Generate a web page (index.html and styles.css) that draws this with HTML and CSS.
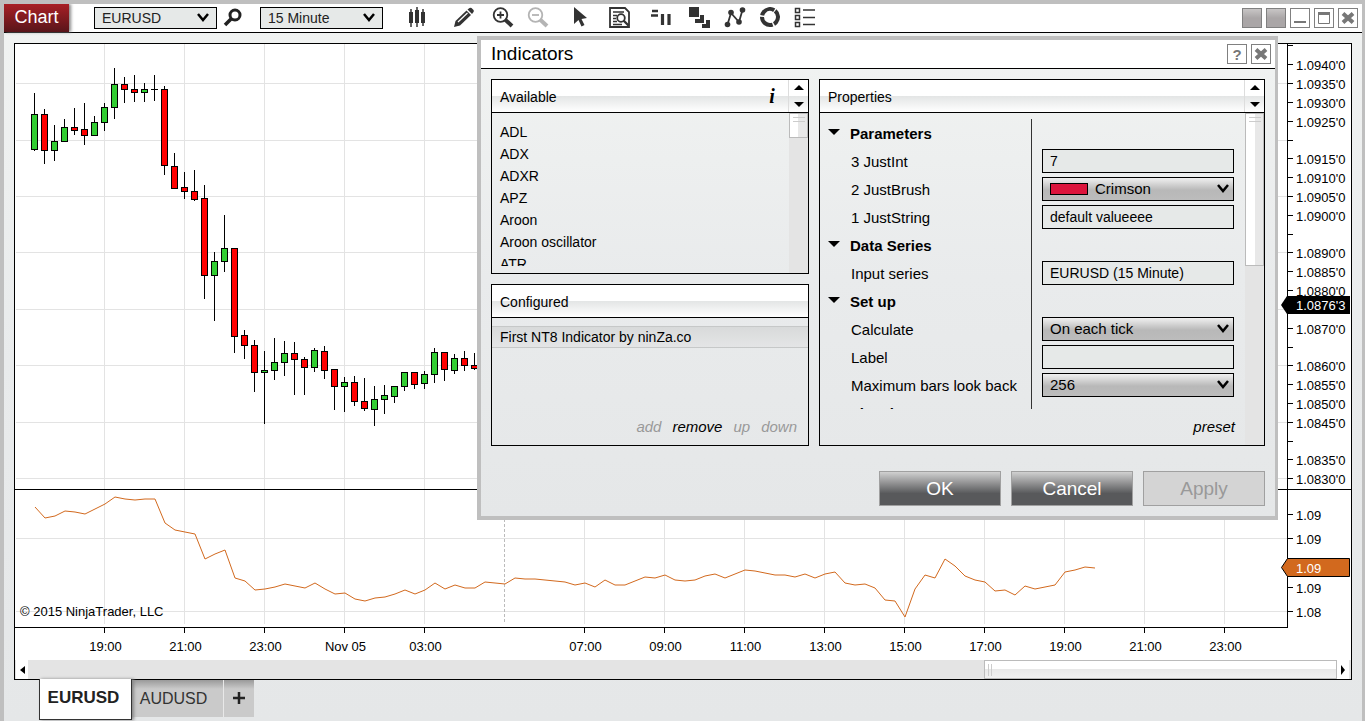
FILE: index.html
```
<!DOCTYPE html>
<html lang="en">
<head>
  <meta charset="UTF-8">
  <title>Chart - EURUSD 15 Minute</title>
  <link rel="stylesheet" href="styles.css">
</head>
<body>

<header class="toolbar">
  <h1 class="app-tab">Chart</h1>
  <select class="tool-select" aria-label="Instrument"><option>EURUSD</option><option>AUDUSD</option></select>
  <button type="button" class="tool search" aria-label="Search">
    <svg width="20" height="20" viewBox="0 0 20 20"><circle cx="12" cy="7" r="5" fill="none" stroke="#222" stroke-width="3"/><path d="M8 11 L2 17" stroke="#222" stroke-width="3.5"/></svg>
  </button>
  <select class="tool-select" aria-label="Interval"><option>15 Minute</option><option>60 Minute</option></select>
  <div class="tools">
    <button type="button" class="tool" aria-label="Chart style">
      <svg width="22" height="22" viewBox="0 0 22 22"><path d="M2 5h4v11H2zM8 3h4v13H8zM14 5h4v11h-4z" fill="#333"/><path d="M4 2v18M10 0v20M16 2v17" stroke="#333" stroke-width="1.500"/></svg>
    </button>
    <button type="button" class="tool sep-l" aria-label="Drawing tools">
      <svg width="22" height="22" viewBox="0 0 22 22"><path d="M1 20l1.500-6L13.500 3.500l4.500 4.500L7 18.500z" fill="#333"/><path d="M14.500 2.500l2-1.500q1-.7 2 0l2 2q.7 1 0 2l-1.500 2z" fill="#333"/><path d="M5 15L14.500 6" stroke="#fff" stroke-width="1.200"/></svg>
    </button>
    <button type="button" class="tool sep" aria-label="Zoom in">
      <svg width="22" height="22" viewBox="0 0 22 22"><circle cx="8.500" cy="8" r="6.800" fill="none" stroke="#333" stroke-width="1.800"/><path d="M5 8h7M8.500 4.500v7" stroke="#333" stroke-width="1.800"/><path d="M13 12.500l7 6.500" stroke="#333" stroke-width="4"/></svg>
    </button>
    <button type="button" class="tool" aria-label="Zoom out" disabled>
      <svg width="22" height="22" viewBox="0 0 22 22"><circle cx="8.500" cy="8" r="6.800" fill="none" stroke="#b4b4b4" stroke-width="1.800"/><path d="M5 8h7" stroke="#b4b4b4" stroke-width="1.800"/><path d="M13 12.500l7 6.500" stroke="#b4b4b4" stroke-width="4"/></svg>
    </button>
    <button type="button" class="tool sep-m" aria-label="Cursor">
      <svg width="22" height="22" viewBox="0 0 22 22"><path d="M5 0v17l4.500-4 3 6.500 3-1.500-3-6 5.500-1z" fill="#333"/></svg>
    </button>
    <button type="button" class="tool sep" aria-label="Data box">
      <svg width="22" height="22" viewBox="0 0 22 22"><path d="M2 1h15l4 4v15H2z" fill="none" stroke="#333" stroke-width="1.800"/><path d="M5 5h11M5 8.500h4M5 11.500h3M5 14.500h4M5 17.500h9" stroke="#333" stroke-width="1.300"/><circle cx="13" cy="11" r="3.800" fill="none" stroke="#333" stroke-width="1.800"/><path d="M15.500 13.500l5 5" stroke="#333" stroke-width="2.400"/></svg>
    </button>
    <button type="button" class="tool sep-m" aria-label="Chart trader">
      <svg width="22" height="22" viewBox="0 0 22 22"><path d="M2 4h6M1 8.500h7" stroke="#333" stroke-width="2.400"/><path d="M12.500 7v11M19 7v11" stroke="#333" stroke-width="3.200"/></svg>
    </button>
    <button type="button" class="tool sep" aria-label="Data series">
      <svg width="22" height="22" viewBox="0 0 22 22"><path d="M0 0h10v10H0zM11 8h4v8H6v-4h5zM17 13h4v8h-8v-4h4z" fill="#333"/></svg>
    </button>
    <button type="button" class="tool" aria-label="Indicators">
      <svg width="22" height="22" viewBox="0 0 22 22"><path d="M3.500 17.500L7 6l8 9L18.500 3" fill="none" stroke="#333" stroke-width="1.800"/><g fill="#333"><circle cx="3.500" cy="17.500" r="2.800"/><circle cx="7" cy="5.500" r="2.800"/><circle cx="15" cy="15" r="2.800"/><circle cx="18.500" cy="3" r="2.800"/></g></svg>
    </button>
    <button type="button" class="tool" aria-label="Strategies">
      <svg width="22" height="22" viewBox="0 0 22 22"><circle cx="11" cy="10" r="8" fill="none" stroke="#333" stroke-width="4" stroke-dasharray="15.250 1.500" transform="rotate(-50 11 10)"/></svg>
    </button>
    <button type="button" class="tool" aria-label="Properties">
      <svg width="22" height="22" viewBox="0 0 22 22"><path d="M1.500 1.500h4v4h-4zM1.500 8.500h4v4h-4zM1.500 15.500h4v4h-4z" fill="none" stroke="#333" stroke-width="1.500"/><path d="M9 3h12M9 10.500h12M9 17.500h12" stroke="#333" stroke-width="1.500"/></svg>
    </button>
  </div>
  <div class="window-buttons">
    <button type="button" class="win-btn filled" aria-label="Link instrument"></button>
    <button type="button" class="win-btn filled" aria-label="Link interval"></button>
    <button type="button" class="win-btn" aria-label="Minimize"><svg width="18" height="18"><path d="M3 13h12" stroke="#777" stroke-width="2"/></svg></button>
    <button type="button" class="win-btn" aria-label="Maximize"><svg width="18" height="18"><path d="M3.500 4h11v10.500h-11z" fill="none" stroke="#777"/><path d="M3 4.500h12" stroke="#777" stroke-width="3"/></svg></button>
    <button type="button" class="win-btn" aria-label="Close"><svg width="18" height="18"><path d="M4 4.500l10 9M14 4.500l-10 9" stroke="#777" stroke-width="4"/></svg></button>
  </div>
</header>

<main class="chart-panel">
  <div class="chart">
    <svg class="plot" id="plot"></svg>
    <svg class="price-axis" id="priceAxis"></svg>
  </div>
  <div class="scroll-x">
    <button type="button" class="scroll-end" aria-label="Scroll left"><svg width="12" height="18"><path d="M9 5v8l-5-4z"/></svg></button>
    <div class="scroll-track"><div class="scroll-thumb"></div></div>
    <button type="button" class="scroll-end" aria-label="Scroll right"><svg width="12" height="18"><path d="M4 4v10l4-5z"/></svg></button>
  </div>
</main>

<nav class="tabs">
  <button type="button" class="tab active">EURUSD</button>
  <button type="button" class="tab">AUDUSD</button>
  <button type="button" class="tab add" aria-label="New tab"><svg width="14" height="14"><path d="M7 1v12M1 7h12" stroke="#222" stroke-width="2.500"/></svg></button>
</nav>

<section class="dialog" role="dialog" aria-labelledby="dialogTitle">
  <div class="dialog-title">
    <h2 id="dialogTitle">Indicators</h2>
    <button type="button" class="win-btn help">?</button>
    <button type="button" class="win-btn" aria-label="Close"><svg width="18" height="18"><path d="M4 4.500l10 9M14 4.500l-10 9" stroke="#777" stroke-width="4"/></svg></button>
  </div>

  <div class="dialog-body">
    <div class="left-col">
      <div class="box available">
        <div class="box-head">
          <h3>Available</h3>
          <button type="button" class="info" aria-label="Info">i</button>
          <div class="spin">
            <button type="button" aria-label="Up"><svg width="10" height="5"><path d="M0 5l5-5 5 5z"/></svg></button>
            <button type="button" aria-label="Down"><svg width="10" height="5"><path d="M0 0l5 5 5-5z"/></svg></button>
          </div>
        </div>
        <div class="box-main">
          <ul class="indicator-list">
            <li>ADL</li>
            <li>ADX</li>
            <li>ADXR</li>
            <li>APZ</li>
            <li>Aroon</li>
            <li>Aroon oscillator</li>
            <li>ATR</li>
          </ul>
          <div class="scroll-y"><div class="thumb-y"></div></div>
        </div>
      </div>

      <div class="box configured">
        <div class="box-head"><h3>Configured</h3></div>
        <ul class="configured-list">
          <li class="selected">First NT8 Indicator by ninZa.co</li>
        </ul>
        <div class="links">
          <button type="button" disabled>add</button>
          <button type="button">remove</button>
          <button type="button" disabled>up</button>
          <button type="button" disabled>down</button>
        </div>
      </div>
    </div>

    <form class="box properties">
      <div class="box-head">
        <h3>Properties</h3>
        <div class="spin">
          <button type="button" aria-label="Up"><svg width="10" height="5"><path d="M0 5l5-5 5 5z"/></svg></button>
          <button type="button" aria-label="Down"><svg width="10" height="5"><path d="M0 0l5 5 5-5z"/></svg></button>
        </div>
      </div>
      <div class="box-main">
        <div class="prop-col">
          <div class="prop-list">
            <div class="prop group"><h4>Parameters</h4><div class="value"></div></div>
            <div class="prop"><label for="justInt">3 JustInt</label><div class="value"><input type="text" id="justInt" value="7"></div></div>
            <div class="prop"><label for="justBrush">2 JustBrush</label><div class="value brush"><select id="justBrush"><option>Crimson</option></select><span class="swatch"></span></div></div>
            <div class="prop"><label for="justString">1 JustString</label><div class="value"><input type="text" id="justString" value="default valueeee"></div></div>
            <div class="prop group"><h4>Data Series</h4><div class="value"></div></div>
            <div class="prop"><label for="series">Input series</label><div class="value"><input type="text" id="series" value="EURUSD (15 Minute)"></div></div>
            <div class="prop group"><h4>Set up</h4><div class="value"></div></div>
            <div class="prop"><label for="calculate">Calculate</label><div class="value"><select id="calculate"><option>On each tick</option><option>On bar close</option></select></div></div>
            <div class="prop"><label for="labelText">Label</label><div class="value"><input type="text" id="labelText"></div></div>
            <div class="prop"><label for="maxBars">Maximum bars look back</label><div class="value"><select id="maxBars"><option>256</option><option>Infinite</option></select></div></div>
            <div class="prop group"><h4>Visual</h4><div class="value"></div></div>
          </div>
          <div class="links"><button type="button">preset</button></div>
        </div>
        <div class="scroll-y"><div class="thumb-y long"></div></div>
      </div>
    </form>
  </div>

  <div class="dialog-actions">
    <button type="button">OK</button>
    <button type="button">Cancel</button>
    <button type="button" disabled>Apply</button>
  </div>
</section>

<script>
  const NS = 'http://www.w3.org/2000/svg';
  const LEFT = 15, TOP = 44;  // plot origin inside the window

  // high, body top, body bottom, low, 1 = up bar
  const candles = [
    [93,114,150,151,1],[109,114,151,164,0],[125,141,151,161,1],[119,127,142,142,1],[108,127,131,135,0],
    [103,129,136,145,0],[116,122,136,136,1],[103,107,123,131,1],[68,84,108,119,1],[77,84,90,103,0],
    [75,89,93,102,0],[83,89,93,102,1],[75,89,89,101,1],[86,89,166,175,0],[153,166,189,189,0],
    [172,187,192,199,0],[170,191,200,201,0],[185,198,276,299,0],[252,261,276,321,1],[215,248,262,272,1],
    [248,248,337,353,0],[330,335,346,359,0],[340,345,373,392,0],[351,370,373,424,1],[338,362,371,380,1],
    [341,353,363,376,1],[342,353,360,395,0],[357,359,368,395,0],[348,350,368,372,1],[346,351,371,379,0],
    [369,369,387,410,0],[377,382,387,412,1],[376,382,402,406,0],[378,401,409,411,0],[386,399,410,426,1],
    [385,395,400,414,1],[386,386,397,403,1],[372,372,387,391,1],[372,372,385,389,0],[371,374,384,389,1],
    [348,352,375,383,1],[352,352,370,381,0],[354,358,371,374,1],[351,358,366,371,0],[353,365,369,370,0]
  ];

  const line = [
    507,518,516,511,512,514,509,504,497,499,500,499,499,523,530,532,534,559,554,550,578,581,590,589,587,
    584,586,588,583,589,594,593,599,601,598,597,594,590,594,590,583,589,585,588,588,582,583,584,578,579,
    579,580,581,582,585,583,587,580,585,585,581,577,578,575,580,581,580,576,574,578,574,570,571,573,575,
    575,577,574,578,574,572,583,585,584,588,600,601,617,589,575,578,559,566,576,580,582,591,590,595,586,
    589,587,585,572,570,567,568
  ];

  const times = ['19:00','21:00','23:00','Nov 05','03:00','','07:00','09:00','11:00','13:00','15:00','17:00','19:00','21:00','23:00'];
  const gridRows = [83,140,196,252,309,365,422,478,538,611];

  const prices = [
    [64,"1.0940'0"],[83,"1.0935'0"],[102,"1.0930'0"],[121,"1.0925'0"],[140,''],[158,"1.0915'0"],[177,"1.0910'0"],
    [196,"1.0905'0"],[215,"1.0900'0"],[234,''],[252,"1.0890'0"],[271,"1.0885'0"],[290,"1.0880'0"],[328,"1.0870'0"],
    [347,''],[365,"1.0860'0"],[384,"1.0855'0"],[403,"1.0850'0"],[422,"1.0845'0"],[441,''],[459,"1.0835'0"],
    [478,"1.0830'0"],[514,'1.09'],[538,'1.09'],[587,'1.09'],[611,'1.08']
  ];

  function add(parent, name, attrs, text) {
    const el = document.createElementNS(NS, name);
    for (const key in attrs) el.setAttribute(key, attrs[key]);
    if (text) el.textContent = text;
    parent.appendChild(el);
    return el;
  }

  function drawPlot() {
    const svg = document.getElementById('plot');
    gridRows.forEach(y => add(svg, 'line', { x1: 1, x2: '100%', y1: y - TOP + 0.5, y2: y - TOP + 0.5, class: 'grid' }));

    const g = add(svg, 'g', { transform: `translate(${-LEFT} ${-TOP})` });
    times.forEach((label, i) => {
      const x = 104.5 + i * 80;
      add(g, 'line', { x1: x, x2: x, y1: TOP, y2: 624, class: label ? 'grid' : 'session' });
      if (!label) return;
      add(g, 'line', { x1: x, x2: x, y1: 628, y2: 633, class: 'axis' });
      add(g, 'text', { x: x + 1, y: 651, 'text-anchor': 'middle' }, label);
    });

    candles.forEach(([high, top, bottom, low, up], i) => {
      const x = 34.5 + i * 10;
      add(g, 'line', { x1: x, x2: x, y1: high, y2: low, class: 'axis' });
      if (top === bottom) {
        add(g, 'line', { x1: x - 3.5, x2: x + 3.5, y1: top + 0.5, y2: top + 0.5, class: 'axis' });
      } else {
        add(g, 'rect', { x: x - 3, y: top + 0.5, width: 6, height: bottom - top - 1, class: up ? 'up' : 'down' });
      }
    });

    add(g, 'polyline', { points: line.map((y, i) => `${35 + i * 10},${y}`).join(' '), class: 'indicator' });
    add(g, 'text', { x: 20, y: 616 }, '© 2015 NinjaTrader, LLC');

    add(svg, 'line', { x1: 0, x2: '100%', y1: 445.5, y2: 445.5, class: 'axis' });
    add(svg, 'line', { x1: 0, x2: '100%', y1: 583.5, y2: 583.5, class: 'axis' });
  }

  function drawAxis() {
    const svg = document.getElementById('priceAxis');
    add(svg, 'path', { d: 'M0.5 0V584M0 445.5H64M1 1.500H6', class: 'axis' });
    prices.forEach(([y, label]) => {
      add(svg, 'line', { x1: 1, x2: 6, y1: y - TOP + 0.5, y2: y - TOP + 0.5, class: 'axis' });
      add(svg, 'text', { x: 9, y: y - TOP + 6 }, label);
    });
    add(svg, 'path', { d: 'M-6 261l6-9H63v18H0z', class: 'marker' });
    add(svg, 'text', { x: 9, y: 266, class: 'marker-text' }, "1.0876'3");
    add(svg, 'path', { d: 'M-5.500 523.500l6-9H62.500v18H0.500z', class: 'marker orange' });
    add(svg, 'text', { x: 9, y: 529, class: 'marker-text' }, '1.09');
  }

  drawPlot();
  drawAxis();
</script>
</body>
</html>
```
FILE: styles.css
```
* { box-sizing: border-box; }
body {
  margin: 0; min-height: 100vh; position: relative;
  border: solid #bfbfbf; border-width: 4px 3px 0 4px;
  background: linear-gradient(#f1f3f2, #e9ebec 50%, #e5e7e8);
  font: 15px/20px "Liberation Sans", Arial, sans-serif; color: #000;
}
h1, h2, h3, h4, ul { margin: 0; padding: 0; font-weight: normal; list-style: none; }
button, input, select { font: inherit; color: inherit; margin: 0; }
button { padding: 0; border: none; background: none; }
svg { display: block; }

/* toolbar */
.toolbar { display: flex; align-items: center; height: 29px; padding-right: 4px; background: #fff; border-bottom: 1px solid #000; }
.app-tab {
  width: 65px; height: 28px; margin-right: 25px; background: linear-gradient(#a82026, #58151a);
  color: #fff; font-size: 18px; line-height: 27px; text-align: center; box-shadow: 2px 0 3px #888;
}
.tool-select, .value select {
  appearance: none; border: 1px solid #000; border-radius: 0; padding: 0 7px; outline: none;
  background: #e6e9e8 url("data:image/svg+xml,%3Csvg xmlns='http://www.w3.org/2000/svg' width='12' height='10'%3E%3Cpath d='M1 1l5 6 5-6' fill='none' stroke='black' stroke-width='2.500'/%3E%3C/svg%3E") no-repeat right 7px center;
}
.tool-select { width: 123px; height: 22px; font-size: 14px; color: #222; }
.tool { display: flex; align-items: center; justify-content: center; width: 24px; height: 24px; }
.search { width: 43px; padding-right: 12px; }
.tools { display: flex; gap: 11px; margin-left: 23px; }
.sep { margin-left: 4px; }
.sep-m { margin-left: 7px; }
.sep-l { margin-left: 11px; }
.window-buttons { display: flex; gap: 4px; margin-left: auto; }
.win-btn { width: 20px; height: 20px; border: 1px solid #808080; background: #fff; color: #777; }
.win-btn.filled { background: linear-gradient(#c8c6c6, #aaa6a7 50%); }
.help { font-weight: bold; }

/* chart */
.chart-panel { margin: 10px 10px 0; border: 1px solid #000; background: #fff; }
.chart { display: grid; grid-template-columns: 1fr 64px; height: 616px; font-size: 13px; }
.plot { width: 100%; height: 616px; }
.price-axis { width: 64px; height: 616px; overflow: visible; }
.grid { stroke: #e3e3e3; }
.session { stroke: #bbb; stroke-dasharray: 3 2; }
.axis { stroke: #000; fill: none; }
.up { fill: #32cd32; stroke: #000; }
.down { fill: #f00; stroke: #000; }
.indicator { fill: none; stroke: #d2691e; stroke-width: 1; }
.marker.orange { fill: #d2691e; stroke: #000; }
.marker-text { fill: #fff; }
.scroll-x { display: flex; height: 19px; background: #e4e4e4; padding: 0 2px 0 1px; }
.scroll-end { width: 12px; background: #fff; }
.scroll-track { flex: 1; display: flex; justify-content: flex-end; }
.scroll-thumb {
  width: 353px; border: 1px solid #bbb;
  background: linear-gradient(90deg, transparent 3px, #ccc 3px 4px, transparent 4px 6px, #ccc 6px 7px, transparent 7px) no-repeat 0 3px / 10px 12px, linear-gradient(#fff 45%, #e8e8e8 50%, #f0f0f0);
}

/* tabs */
.tabs { display: flex; align-items: flex-start; margin: -1px 0 0 35px; position: relative; }
.tab {
  width: 92px; height: 37px; margin-top: 1px; border-right: 1px solid #e8e8e8; color: #333; font-size: 16px;
  background: linear-gradient(#9a9a9a, #cacaca 9px); padding-right: 8px;
}
.tab.active { width: 93px; height: 41px; margin: 0; border: 1px solid #333; border-top: none; background: #fff; color: #222; font-size: 17px; font-weight: bold; padding: 0 4px 2px 0; box-shadow: 2px 0 3px #888; z-index: 1; }
.tab.add { width: 30px; padding: 0 0 2px 8px; border: none; }

/* indicators dialog */
.dialog {
  position: absolute; top: 32px; left: 473px; width: 801px;
  border: 4px solid #bfbfbf; border-right-width: 3px;
  background: linear-gradient(#f1f3f2, #e9ebec 50%, #e5e7e8);
}
.dialog-title { display: flex; align-items: center; gap: 4px; height: 29px; padding: 0 4px 0 10px; background: #fff; border-bottom: 1px solid #000; }
.dialog-title h2 { flex: 1; font-size: 19px; }
.dialog-body { display: grid; grid-template-columns: 318px 1fr; gap: 10px; padding: 10px; }
.left-col { display: flex; flex-direction: column; gap: 10px; }
.box { border: 1px solid #000; display: flex; flex-direction: column; }
.box-head {
  display: flex; align-items: center; height: 33px; padding-left: 8px; border-bottom: 1px solid #000;
  background: linear-gradient(#fff 50%, #e3e5e5 50%, #fff);
}
.box-head h3 { flex: 1; padding-top: 2px; font-size: 14px; }
.info { width: 32px; font: italic bold 20px/20px "Liberation Serif", serif; }
.spin { display: flex; flex-direction: column; align-items: center; justify-content: space-between; width: 20px; height: 32px; padding: 5px 0; border-left: 1px solid #ddd; }
.box-main { display: flex; flex: 1; }
.scroll-y { width: 19px; background: #e4e4e4; }
.thumb-y {
  height: 25px; border: 1px solid #bbb;
  background: linear-gradient(transparent 3px, #ccc 3px 4px, transparent 4px 7px, #ccc 7px 8px, transparent 8px) no-repeat 3px 0 / 12px 10px, linear-gradient(90deg, #fff 50%, #e8e8e8 50%);
}
.thumb-y.long { height: 153px; }
.available { height: 195px; }
.indicator-list { flex: 1; height: 145px; margin-top: 8px; padding-left: 8px; overflow: hidden; font-size: 14px; line-height: 22px; }
.configured { height: 162px; }
.configured-list { flex: 1; padding-top: 8px; font-size: 14px; }
.selected { height: 22px; padding-left: 8px; background: linear-gradient(#d8dada, #e4e5e6); border: solid #c6c8c8; border-width: 1px 0; }
.links { display: flex; justify-content: flex-end; gap: 11px; height: 36px; padding-right: 11px; font-style: italic; }
.links button:disabled { color: #999; }

/* property grid */
.prop-col { flex: 1; display: flex; flex-direction: column; justify-content: space-between; }
.prop-col .links { padding-right: 10px; }
.prop-list { height: 290px; margin-top: 6px; overflow: hidden; }
.prop { display: grid; grid-template-columns: 1fr 214px; height: 28px; align-items: center; padding-left: 31px; }
.prop label, .group h4 { padding-top: 2px; }
.group { padding-left: 8px; }
.group h4 { display: flex; align-items: center; gap: 10px; font-weight: bold; }
.group h4::before { content: ""; margin-bottom: 4px; border: solid transparent; border-width: 6px 6px 0; border-top-color: #000; }
.value { position: relative; display: flex; align-items: center; height: 28px; padding-left: 10px; border-left: 1px solid #333; }
.value input, .value select { width: 192px; height: 24px; border: 1px solid #000; padding: 0 7px; outline: none; }
.value input { background: #e6e9e8; font-size: 14px; }
.value select {
  background-image: url("data:image/svg+xml,%3Csvg xmlns='http://www.w3.org/2000/svg' width='12' height='10'%3E%3Cpath d='M1 1l5 6 5-6' fill='none' stroke='black' stroke-width='2.500'/%3E%3C/svg%3E"), linear-gradient(#f0f0f0, #b8b8b8 55%, #bcbcbc);
  background-position: right 4px center, 0 0; background-size: auto;
}
.value.brush select { padding-left: 52px; }
.swatch { position: absolute; left: 18px; top: 8px; width: 38px; height: 12px; background: #dc143c; border: 1px solid #000; }

.dialog-actions { display: flex; justify-content: flex-end; gap: 10px; padding: 15px 10px 10px; }
.dialog-actions button {
  width: 122px; height: 35px; border: 1px solid #a0a0a0; color: #fff; font-size: 19px;
  background: linear-gradient(#d0d0d0, #58595b 65%);
}
.dialog-actions button:disabled { background: #d4d4d4; color: #999; }
```
